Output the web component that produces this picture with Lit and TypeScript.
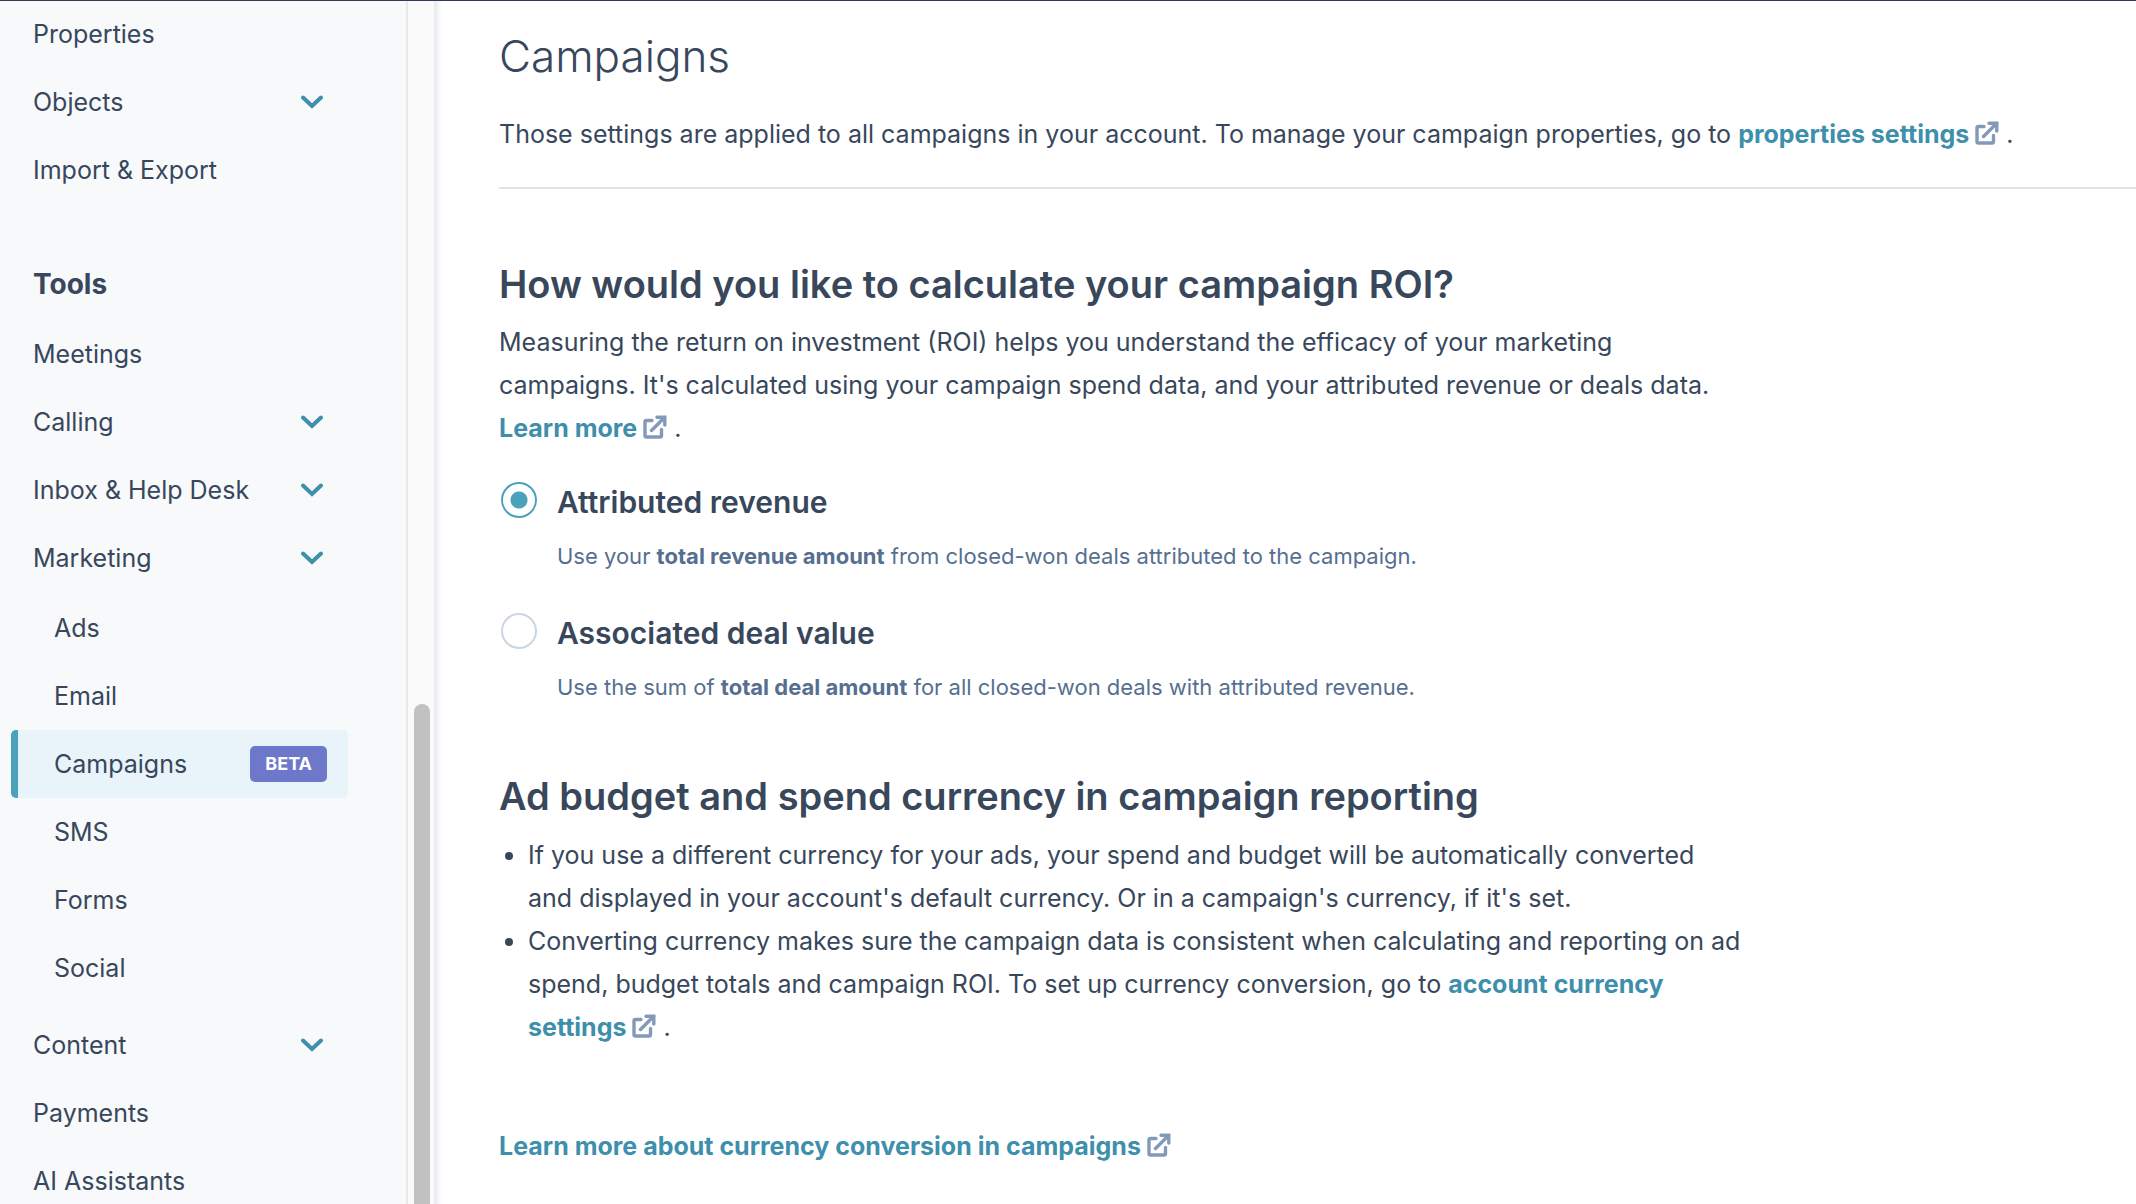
import { LitElement, html, css, svg, nothing } from "lit";
import { customElement, property, state } from "lit/decorators.js";
import { classMap } from "lit/directives/class-map.js";

interface NavItem {
  label: string;
  expandable?: boolean;
  badge?: string;
  active?: boolean;
  children?: NavItem[];
}

const DATA_ITEMS: NavItem[] = [
  { label: "Properties" },
  { label: "Objects", expandable: true },
  { label: "Import & Export" },
];

const TOOL_ITEMS: NavItem[] = [
  { label: "Meetings" },
  { label: "Calling", expandable: true },
  { label: "Inbox & Help Desk", expandable: true },
  {
    label: "Marketing",
    expandable: true,
    children: [
      { label: "Ads" },
      { label: "Email" },
      { label: "Campaigns", badge: "BETA", active: true },
      { label: "SMS" },
      { label: "Forms" },
      { label: "Social" },
    ],
  },
  { label: "Content", expandable: true },
  { label: "Payments" },
  { label: "AI Assistants" },
];

const chevron = svg`<svg class="chevron" viewBox="0 0 22 14" width="22" height="14" aria-hidden="true">
  <path d="M2 2.5 L11 11 L20 2.5" fill="none" stroke="currentColor" stroke-width="4" stroke-linecap="round" stroke-linejoin="miter"/>
</svg>`;

@customElement("settings-nav")
class SettingsNav extends LitElement {
  static styles = css`
    :host {
      display: flex;
      flex: none;
      min-height: 0;
    }
    .nav {
      width: 406px;
      background: #f7f9fb;
      border-right: 2px solid #e8e8e8;
      overflow: hidden;
    }
    .list {
      list-style: none;
      margin: 0;
      padding: 0;
    }
    .sublist {
      list-style: none;
      margin: 0;
      padding: 2px 0 9px;
    }
    .row {
      box-sizing: border-box;
      display: flex;
      align-items: center;
      justify-content: space-between;
      width: 337px;
      height: 68px;
      margin: 0 0 0 11px;
      padding: 0 25px 0 22px;
      border: 0;
      border-radius: 5px;
      background: none;
      color: inherit;
      font: inherit;
      text-align: left;
      text-decoration: none;
    }
    .nested {
      padding: 0 21px 0 43px;
    }
    .active {
      border-left: 7px solid #4aa2ba;
      padding-left: 36px;
      background: #e8f4f9;
    }
    .heading {
      margin: 0;
      padding: 60px 0 16px 33px;
      font-size: 28px;
      line-height: 40px;
      font-weight: 700;
    }
    .chevron {
      display: block;
      color: #3e90ab;
    }
    .badge {
      padding: 0 15px;
      border-radius: 5px;
      background: #6e78cb;
      color: #fff;
      font-size: 18px;
      line-height: 36px;
      font-weight: 700;
    }
    .track {
      display: grid;
      grid-template-rows: 704fr 500fr;
      width: 26px;
      background: #fafafa;
      border-right: 2px solid #ececef;
    }
    .thumb {
      grid-row: 2;
      margin: 0 4px 0 6px;
      border-radius: 8px 8px 0 0;
      background: #c1c1c1;
    }
  `;

  private renderItem(item: NavItem, nested = false): unknown {
    const classes = classMap({ row: true, nested, active: !!item.active });
    return html`<li>
      ${item.expandable
        ? html`<button class=${classes} type="button" aria-expanded=${item.children ? "true" : "false"}>
            <span>${item.label}</span>${chevron}
          </button>`
        : html`<a class=${classes} href="#" aria-current=${item.active ? "page" : "false"}>
            <span>${item.label}</span>${item.badge ? html`<span class="badge">${item.badge}</span>` : nothing}
          </a>`}
      ${item.children
        ? html`<ul class="sublist">
            ${item.children.map((child) => this.renderItem(child, true))}
          </ul>`
        : nothing}
    </li>`;
  }

  render() {
    return html`
      <nav class="nav">
        <ul class="list">
          ${DATA_ITEMS.map((item) => this.renderItem(item))}
        </ul>
        <h2 class="heading">Tools</h2>
        <ul class="list">
          ${TOOL_ITEMS.map((item) => this.renderItem(item))}
        </ul>
      </nav>
      <div class="track"><div class="thumb"></div></div>
    `;
  }
}

@customElement("external-link")
class ExternalLink extends LitElement {
  @property() label = "";

  static styles = css`
    .link {
      color: #3e8fab;
      font-weight: 700;
      text-decoration: none;
    }
    .icon {
      margin-bottom: -2px;
      color: #8399ba;
    }
  `;

  render() {
    return html`<a class="link" href="#">${this.label} <svg class="icon" viewBox="0 0 24 24" width="24" height="24" aria-hidden="true">
        <g fill="none" stroke="currentColor" stroke-width="3.4" stroke-linecap="round" stroke-linejoin="round">
          <path d="M9 5.5 H3.5 Q2 5.5 2 7 V20.5 Q2 22 3.5 22 H17 Q18.5 22 18.5 20.5 V14.5"/>
          <path d="M8.5 15.5 L21.5 2.5"/>
          <path d="M14 2.2 H21.8 V10" stroke-linejoin="miter"/>
        </g>
      </svg></a>`;
  }
}

@customElement("app-root")
class AppRoot extends LitElement {
  @state() private model = "attributed";

  static styles = css`
    :host {
      display: block;
      color: #38475b;
      font-family: Inter, "Liberation Sans", sans-serif;
      font-size: 25px;
      line-height: 43px;
    }
    .shell {
      position: relative;
      display: flex;
      height: 100vh;
      overflow: hidden;
      background: #fff;
    }
    .shell::before {
      content: "";
      position: absolute;
      inset: 0 0 auto;
      height: 1px;
      background: #2e3b50;
    }
    .main {
      flex: 1;
      min-width: 0;
      padding: 24px 0 0 63px;
      box-shadow: inset 8px 0 6px -7px #dfe5ee;
    }
    .title {
      margin: 0;
      font-size: 44px;
      line-height: 64px;
      font-weight: 300;
    }
    .intro {
      margin: 0;
      padding: 25px 0 31px;
      border-bottom: 2px solid #dfe3ea;
    }
    .section {
      max-width: 1243px;
    }
    .subtitle {
      margin: 0;
      font-size: 38px;
      line-height: 48px;
      font-weight: 600;
    }
    .roi {
      padding-top: 71px;
    }
    .text {
      margin: 0;
      padding-top: 13px;
    }
    .options {
      display: grid;
      gap: 39px;
      margin: 0;
      padding: 32px 0 0 2px;
      border: 0;
    }
    .option {
      display: grid;
      grid-template-columns: 36px 1fr;
      column-gap: 20px;
      row-gap: 16px;
    }
    .radio {
      appearance: none;
      box-sizing: border-box;
      width: 36px;
      height: 36px;
      margin: 0;
      border: 2px solid #cbd6e2;
      border-radius: 50%;
      background: #fff;
    }
    .radio:checked {
      border-color: #4aa2ba;
      background: radial-gradient(circle, #4aa2ba 8px, #fff 9px);
    }
    .label {
      font-size: 30px;
      line-height: 40px;
      font-weight: 600;
    }
    .help {
      grid-column: 2;
      margin: 0;
      color: #566f90;
      font-size: 22px;
      line-height: 36px;
    }
    .strong {
      font-weight: 700;
    }
    .currency {
      padding-top: 67px;
    }
    .bullets {
      margin: 0;
      padding: 14px 0 0 29px;
    }
    .more {
      margin: 0;
      padding-top: 76px;
    }
  `;

  private renderOption(value: string, label: string, help: unknown) {
    return html`<div class="option">
      <input
        class="radio"
        type="radio"
        name="roi"
        id=${value}
        .checked=${this.model === value}
        @change=${() => (this.model = value)}
      />
      <label class="label" for=${value}>${label}</label>
      <p class="help">${help}</p>
    </div>`;
  }

  render() {
    return html`<div class="shell">
      <settings-nav></settings-nav>
      <main class="main">
        <h1 class="title">Campaigns</h1>
        <p class="intro">
          Those settings are applied to all campaigns in your account. To manage your campaign properties, go to
          <external-link label="properties settings"></external-link> .
        </p>
        <section class="section roi">
          <h2 class="subtitle">How would you like to calculate your campaign ROI?</h2>
          <p class="text">
            Measuring the return on investment (ROI) helps you understand the efficacy of your marketing campaigns.
            It's calculated using your campaign spend data, and your attributed revenue or deals data.
            <external-link label="Learn more"></external-link> .
          </p>
          <div class="options" role="radiogroup" aria-label="Campaign ROI">
            ${this.renderOption(
              "attributed",
              "Attributed revenue",
              html`Use your <strong class="strong">total revenue amount</strong> from closed-won deals attributed to the campaign.`
            )}
            ${this.renderOption(
              "associated",
              "Associated deal value",
              html`Use the sum of <strong class="strong">total deal amount</strong> for all closed-won deals with attributed revenue.`
            )}
          </div>
        </section>
        <section class="section currency">
          <h2 class="subtitle">Ad budget and spend currency in campaign reporting</h2>
          <ul class="bullets">
            <li>
              If you use a different currency for your ads, your spend and budget will be automatically converted and
              displayed in your account's default currency. Or in a campaign's currency, if it's set.
            </li>
            <li>
              Converting currency makes sure the campaign data is consistent when calculating and reporting on ad
              spend, budget totals and campaign ROI. To set up currency conversion, go to
              <external-link label="account currency settings"></external-link> .
            </li>
          </ul>
          <p class="more"><external-link label="Learn more about currency conversion in campaigns"></external-link></p>
        </section>
      </main>
    </div>`;
  }
}
